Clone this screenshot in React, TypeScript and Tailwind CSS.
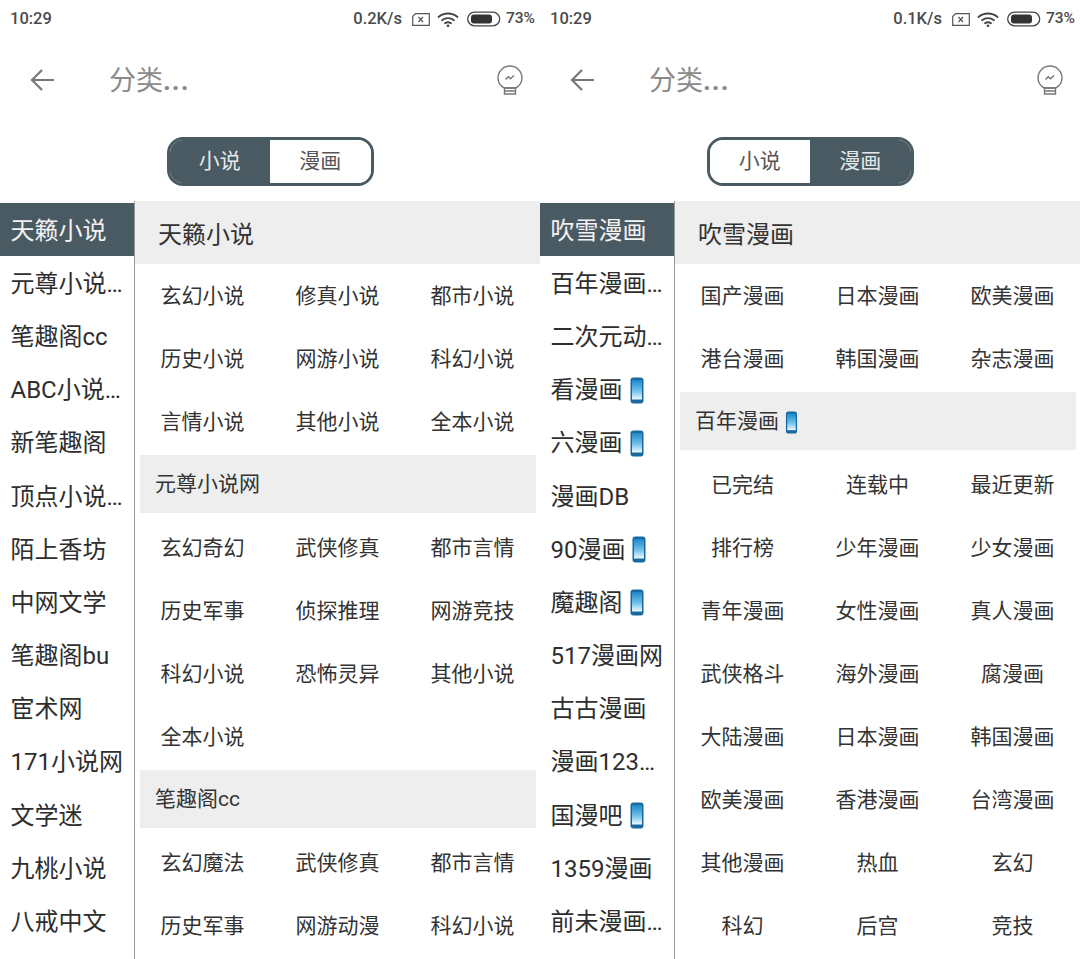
import React from 'react';

type Item = { label: string; phone?: boolean };
type Block = { title?: string; phone?: boolean; rows: string[] };

function PhoneIcon({ small }: { small?: boolean }) {
    return (
        <svg viewBox="0 0 14 27" className={small ? 'h-[23px] w-[13px]' : 'h-[27px] w-[14px]'}>
            <defs>
                <linearGradient id="phoneScreen" x1="0" y1="0" x2="0" y2="1">
                    <stop offset="0" stopColor="#1f86c8" />
                    <stop offset="0.55" stopColor="#6fc0ea" />
                    <stop offset="1" stopColor="#eef8fd" />
                </linearGradient>
            </defs>
            <rect x="0.5" y="0.5" width="13" height="26" rx="3" fill="#17699f" />
            <rect x="2" y="3" width="10" height="19.500" fill="url(#phoneScreen)" />
        </svg>
    );
}

function StatusBar({ speed }: { speed: string }) {
    return (
        <div className="flex h-[38px] items-center justify-between pl-[10px] pr-[5px] text-[16.5px] font-medium text-[#4a4a4a]">
            <span>10:29</span>
            <div className="flex items-center">
                <span>{speed}</span>
                {/* sim */}
                <svg viewBox="0 0 18 13" className="ml-[10px] h-[13px] w-[18px]" fill="none" stroke="#555" strokeWidth="1.2">
                    <path d="M3.500 0.700h13.800v11.600H0.700V3.500z" />
                    <path d="M6.500 4l4.500 5M11 4l-4.500 5" />
                </svg>
                {/* wifi */}
                <svg viewBox="0 0 22 15" className="ml-[7px] h-[15px] w-[22px]" fill="none" stroke="#444" strokeWidth="1.8" strokeLinecap="round">
                    <path d="M1.500 5c5.500-4.700 13.500-4.700 19 0" />
                    <path d="M5 8.300c3.500-2.800 8.500-2.800 12 0" />
                    <path d="M8 11.300c1.800-1.300 4.200-1.300 6 0" />
                    <circle cx="11" cy="14" r="0.500" fill="#444" />
                </svg>
                {/* battery */}
                <svg viewBox="0 0 34 16" className="ml-[8px] h-[16px] w-[34px]">
                    <rect x="0.700" y="1.200" width="32" height="13.600" rx="6.800" fill="none" stroke="#444" strokeWidth="1.300" />
                    <rect x="4" y="3.600" width="21" height="8.800" rx="3" fill="#333" />
                </svg>
                <span className="ml-[5px] text-[15.5px]">73%</span>
            </div>
        </div>
    );
}

function Toolbar() {
    return (
        <div className="flex h-[84px] items-center pl-[30px] pr-[17px]">
            <svg viewBox="0 0 24 24" className="h-[24px] w-[24px]" fill="none" stroke="#777" strokeWidth="2.2">
                <path d="M24 12H2M12 2L2 12l10 10" />
            </svg>
            <span className="ml-[55px] flex-1 pt-[3px] text-[27px] text-[#8a8a8a]">
                分类<span className="font-bold tracking-[1px]">...</span>
            </span>
            <svg viewBox="0 0 26 30" className="h-[30px] w-[26px]" fill="none" stroke="#777" strokeWidth="1.400">
                <path d="M7.500 23C3.500 21 1 17.500 1 13a12 12 0 0 1 24 0c0 4.500-2.500 8-6.500 10z" />
                <path d="M7.500 23h11v6h-11zM7.500 26h11" />
                <path d="M8.500 14.500l2.800-2.800 2.200 2 3.500-3.200" />
            </svg>
        </div>
    );
}

function Toggle({ active }: { active: 0 | 1 }) {
    const on = 'bg-[#4a5a62] text-[#e4e8ea]';
    const off = 'bg-white text-[#555]';
    return (
        <div className="flex h-[79px] items-start justify-center pt-[15px]">
            <div className="flex h-[49px] w-[207px] overflow-hidden rounded-[16px] border-[3px] border-[#4a5a62] text-[21px]">
                <div className={`flex flex-1 items-center justify-center ${active === 0 ? on : off}`}>小说</div>
                <div className={`flex flex-1 items-center justify-center ${active === 1 ? on : off}`}>漫画</div>
            </div>
        </div>
    );
}

function Sidebar({ items }: { items: Item[] }) {
    return (
        <div className="h-full w-[135px] shrink-0 border-r border-[#999] pt-[2px] text-[24px] text-[#2e2e2e]">
            {items.map((item, i) => (
                <div
                    key={item.label}
                    className={`flex h-[53.200px] items-center pl-[10.500px] pt-[2px] whitespace-nowrap ${i === 0 ? 'bg-[#4a5a62] text-[#f2f2f2]' : ''}`}
                >
                    {item.label}
                    {item.phone && <span className="ml-[7px] flex"><PhoneIcon /></span>}
                </div>
            ))}
        </div>
    );
}

function Panel({ heading, blocks }: { heading: string; blocks: Block[] }) {
    return (
        <div className="min-w-0 flex-1">
            <div className="flex h-[63px] items-center bg-[#eeeeee] pl-[23px] pt-[4px] text-[24px] text-[#333]">{heading}</div>
            {blocks.map((block, i) => (
                <div key={i}>
                    {block.title && (
                        <div className="mb-[3px] ml-[5px] mr-[4px] mt-[2px] flex h-[58px] items-center bg-[#eeeeee] pl-[15px] pt-[2px] text-[21px] text-[#333]">
                            {block.title}
                            {block.phone && <span className="ml-[6px] flex"><PhoneIcon small /></span>}
                        </div>
                    )}
                    <div className="grid grid-cols-3">
                        {block.rows.map((label, j) => (
                            <div key={j} className="flex h-[63px] items-center justify-center pt-[2px] text-[21px] text-[#333]">
                                {label}
                            </div>
                        ))}
                    </div>
                </div>
            ))}
        </div>
    );
}

function Screen(props: { speed: string; active: 0 | 1; items: Item[]; heading: string; blocks: Block[] }) {
    return (
        <div className="flex h-[959px] w-[540px] flex-col overflow-hidden bg-white">
            <StatusBar speed={props.speed} />
            <Toolbar />
            <Toggle active={props.active} />
            <div className="flex min-h-0 flex-1">
                <Sidebar items={props.items} />
                <Panel heading={props.heading} blocks={props.blocks} />
            </div>
        </div>
    );
}

const novelSites: Item[] = ['天籁小说', '元尊小说…', '笔趣阁cc', 'ABC小说…', '新笔趣阁', '顶点小说…', '陌上香坊', '中网文学', '笔趣阁bu', '宦术网', '171小说网', '文学迷', '九桃小说', '八戒中文'].map((label) => ({ label }));

const comicSites: Item[] = [
    { label: '吹雪漫画' },
    { label: '百年漫画…' },
    { label: '二次元动…' },
    { label: '看漫画', phone: true },
    { label: '六漫画', phone: true },
    { label: '漫画DB' },
    { label: '90漫画', phone: true },
    { label: '魔趣阁', phone: true },
    { label: '517漫画网' },
    { label: '古古漫画' },
    { label: '漫画123…' },
    { label: '国漫吧', phone: true },
    { label: '1359漫画' },
    { label: '前未漫画…' },
];

const novelBlocks: Block[] = [
    { rows: ['玄幻小说', '修真小说', '都市小说', '历史小说', '网游小说', '科幻小说', '言情小说', '其他小说', '全本小说'] },
    { title: '元尊小说网', rows: ['玄幻奇幻', '武侠修真', '都市言情', '历史军事', '侦探推理', '网游竞技', '科幻小说', '恐怖灵异', '其他小说', '全本小说'] },
    { title: '笔趣阁cc', rows: ['玄幻魔法', '武侠修真', '都市言情', '历史军事', '网游动漫', '科幻小说'] },
];

const comicBlocks: Block[] = [
    { rows: ['国产漫画', '日本漫画', '欧美漫画', '港台漫画', '韩国漫画', '杂志漫画'] },
    {
        title: '百年漫画',
        phone: true,
        rows: ['已完结', '连载中', '最近更新', '排行榜', '少年漫画', '少女漫画', '青年漫画', '女性漫画', '真人漫画', '武侠格斗', '海外漫画', '腐漫画', '大陆漫画', '日本漫画', '韩国漫画', '欧美漫画', '香港漫画', '台湾漫画', '其他漫画', '热血', '玄幻', '科幻', '后宫', '竞技'],
    },
];

export default function App() {
    return (
        <div className="flex h-[959px] w-[1080px] overflow-hidden bg-white font-['Roboto','Noto_Sans_CJK_SC',sans-serif]">
            <Screen speed="0.2K/s" active={0} items={novelSites} heading="天籁小说" blocks={novelBlocks} />
            <Screen speed="0.1K/s" active={1} items={comicSites} heading="吹雪漫画" blocks={comicBlocks} />
        </div>
    );
}
